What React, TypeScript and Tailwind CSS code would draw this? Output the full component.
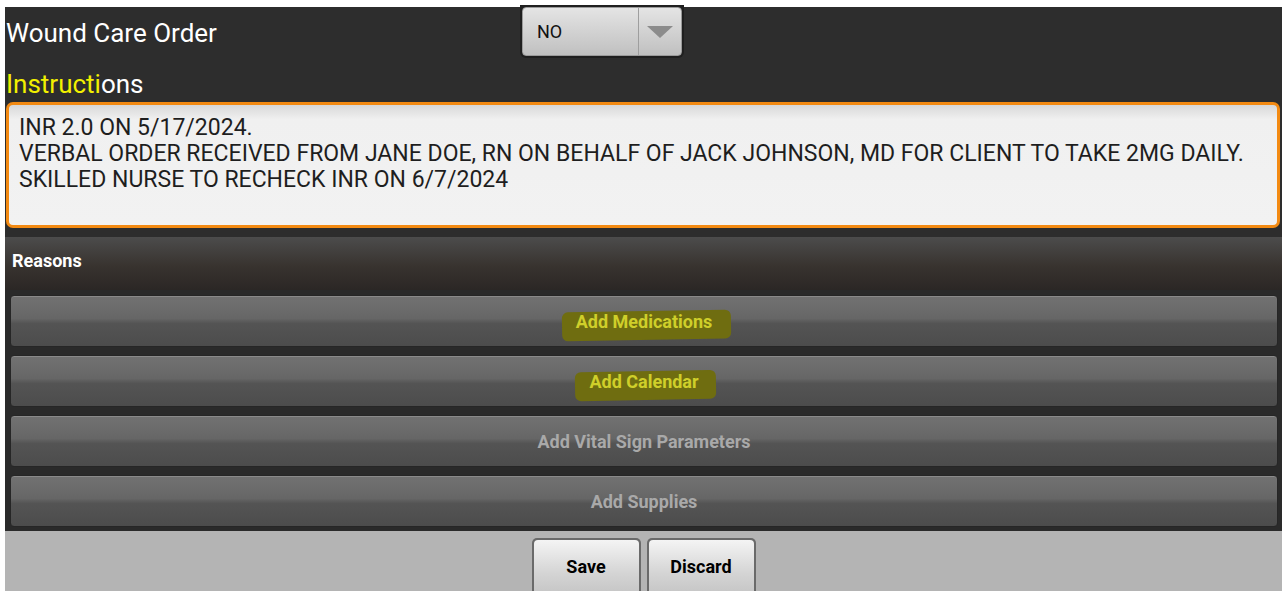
import React from "react";

const reasons = [
  { label: "Add Medications", marked: true },
  { label: "Add Calendar", marked: true },
  { label: "Add Vital Sign Parameters", marked: false },
  { label: "Add Supplies", marked: false },
];

const lines = [
  "INR 2.0 ON 5/17/2024.",
  "VERBAL ORDER RECEIVED FROM JANE DOE, RN ON BEHALF OF JACK JOHNSON, MD FOR CLIENT TO TAKE 2MG DAILY.",
  "SKILLED NURSE TO RECHECK INR ON 6/7/2024",
];

function ReasonButton({ label, marked }: { label: string; marked: boolean }) {
  return (
    <button className="h-[52px] w-full rounded-[4px] border border-[#262626] bg-[linear-gradient(to_bottom,#727272_0%,#666_45%,#545454_55%,#4c4c4c_100%)] shadow-[inset_0_1px_0_#8a8a8a] flex items-center justify-center">
      {marked ? (
        <span className="relative px-[8px]">
          <span className="absolute left-[-6px] right-[-10px] top-[3px] bottom-[-5px] -rotate-1 rounded-[6px] bg-[#6f6d10]" />
          <span className="relative text-[18px] font-bold text-[#cfcf2a]">{label}</span>
        </span>
      ) : (
        <span className="text-[18px] font-bold text-[#a9a9a9]">{label}</span>
      )}
    </button>
  );
}

export default function App() {
  return (
    <div className="w-[1288px] h-[594px] bg-white pt-[7px] pl-[5px] pr-[6px] font-['Roboto',sans-serif] overflow-hidden">
      <div className="bg-[#2d2d2d] pl-[1px] pr-[2px] pb-[9px]">
        <div className="flex items-center h-[51px]">
          <div className="w-[514px] text-[26px] leading-[30px] text-white">Wound Care Order</div>
          <div className="h-[53px] -mt-[2px] w-[164px] rounded-b-[6px] bg-[#1f1f1f] p-[2px]">
            <div className="h-full flex rounded-[4px] border border-[#9a9a9a] bg-[linear-gradient(to_bottom,#e4e4e4,#c0c0c0)]">
              <div className="flex-1 flex items-center pl-[14px] text-[18px] text-[#111] border-r border-[#9e9e9e]">NO</div>
              <div className="w-[42px] flex items-center justify-center">
                <svg width="26" height="12" viewBox="0 0 26 12">
                  <path d="M0 0 H26 L13 12 Z" fill="#8c8c8c" />
                </svg>
              </div>
            </div>
          </div>
        </div>
        <div className="h-[44px] pt-[11px]">
          <div className="text-[26px] leading-[30px] text-white">
            <span className="text-[#f2f000]">Instructi</span>ons
          </div>
        </div>
        <div className="h-[126px] rounded-[7px] border-[3px] border-[#f38a12] bg-[linear-gradient(to_bottom,#d8d8d8_0%,#f0f0f0_12%,#f2f2f2_100%)] pt-[10px] pl-[10px] text-[23px] leading-[26px] text-[#1e1e1e]">
          {lines.map((l) => (
            <div key={l}>{l}</div>
          ))}
        </div>
      </div>
      <div className="h-[53px] flex items-center pl-[7px] pb-[6px] bg-[linear-gradient(to_bottom,#4c4c4c,#38332f_55%,#2b2725)] text-[18px] font-bold text-white">
        Reasons
      </div>
      <div className="bg-[#2a2a2a] pt-[5px] pb-[4px] pl-[5px] pr-[4px] flex flex-col gap-[8px]">
        {reasons.map((r) => (
          <ReasonButton key={r.label} label={r.label} marked={r.marked} />
        ))}
      </div>
      <div className="h-[60px] bg-[#b4b4b4] flex justify-center gap-[6px] pt-[7px] overflow-hidden">
        {["Save", "Discard"].map((t) => (
          <div key={t} className="h-[60px] w-[109px] rounded-[5px] bg-[#6a6a6a] p-[2px]">
            <div className="h-full rounded-[4px] bg-[linear-gradient(to_bottom,#f4f4f4,#d4d4d4_60%,#c4c4c4)] flex justify-center pt-[13px] text-[18px] font-bold text-black">
              {t}
            </div>
          </div>
        ))}
      </div>
    </div>
  );
}
